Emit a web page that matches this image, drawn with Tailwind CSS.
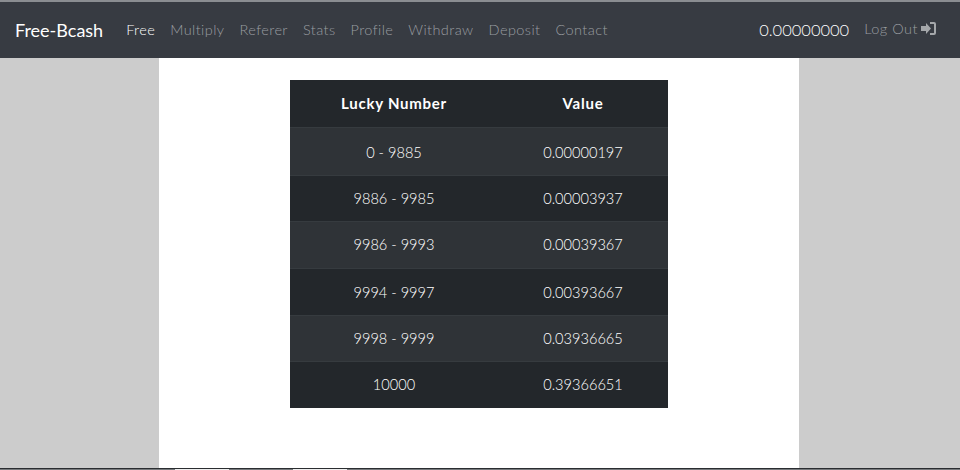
<!DOCTYPE html>
<html lang="en">
<head>
    <meta charset="UTF-8">
    <title>Free-Bcash</title>
    <script src="https://cdn.jsdelivr.net/npm/@tailwindcss/browser@4"></script>
</head>
<body class="w-[960px] h-[470px] overflow-hidden bg-[#cccccc] font-['Lato',sans-serif] flex flex-col">
    <nav class="h-[58px] shrink-0 border-t-2 border-[#8a8d91] bg-[#373b42] flex items-center pl-[15px] pr-[24px]">
        <a class="text-[18px] text-white mr-[23px]">Free-Bcash</a>
        <ul class="flex gap-[15px] text-[14.5px] tracking-[0.42px] text-[#9a9da1] font-light">
            <li class="text-white">Free</li>
            <li>Multiply</li>
            <li>Referer</li>
            <li>Stats</li>
            <li>Profile</li>
            <li>Withdraw</li>
            <li>Deposit</li>
            <li>Contact</li>
        </ul>
        <span class="ml-auto text-[16.5px] font-light text-white">0.00000000</span>
        <a class="ml-[15px] mb-[3px] text-[14.5px] tracking-[0.5px] font-light text-[#9a9da1] flex items-center gap-[3px]">Log Out
            <svg class="w-[15px] h-[13px]" viewBox="0 0 15 13" fill="#a4a7aa"><path d="M0 4h5V1l5 5.5-5 5.5V9H0z"/><path d="M9 0h4a2 2 0 0 1 2 2v9a2 2 0 0 1-2 2H9v-2h4V2H9z"/></svg>
        </a>
    </nav>
    <main class="w-[640px] ml-[159px] flex-1 bg-white pt-[22px] flex flex-col items-center">
        <table class="w-[378px] text-center text-[14.6px] font-light text-white border-collapse">
            <thead class="bg-[#23272b] font-bold">
                <tr class="h-[47px]"><th class="w-[208px] text-[15px] tracking-[0.75px]">Lucky Number</th><th class="text-[15px] tracking-[0.75px]">Value</th></tr>
            </thead>
            <tbody>
                <tr class="h-[48px] bg-[#2f3337] border-t border-[#363b3f]"><td class="pt-[4px]">0 - 9885</td><td class="pt-[4px]">0.00000197</td></tr>
                <tr class="h-[46px] bg-[#23272b] border-t border-[#363b3f]"><td class="pt-[2px]">9886 - 9985</td><td class="pt-[2px]">0.00003937</td></tr>
                <tr class="h-[47px] bg-[#2f3337] border-t border-[#363b3f]"><td>9986 - 9993</td><td>0.00039367</td></tr>
                <tr class="h-[47px] bg-[#23272b] border-t border-[#363b3f]"><td class="pt-[2px]">9994 - 9997</td><td class="pt-[2px]">0.00393667</td></tr>
                <tr class="h-[46px] bg-[#2f3337] border-t border-[#363b3f]"><td class="pt-[2px]">9998 - 9999</td><td class="pt-[2px]">0.03936665</td></tr>
                <tr class="h-[47px] bg-[#23272b] border-t border-[#363b3f]"><td>10000</td><td>0.39366651</td></tr>
            </tbody>
        </table>
    </main>
    <div class="h-[2px] shrink-0 flex border-t border-[#2a2d30] bg-[#777a7d]">
        <div class="w-[175px]"></div>
        <div class="w-[54px] bg-[#eeeeee]"></div>
        <div class="w-[64px]"></div>
        <div class="w-[54px] bg-[#eeeeee]"></div>
    </div>
</body>
</html>
